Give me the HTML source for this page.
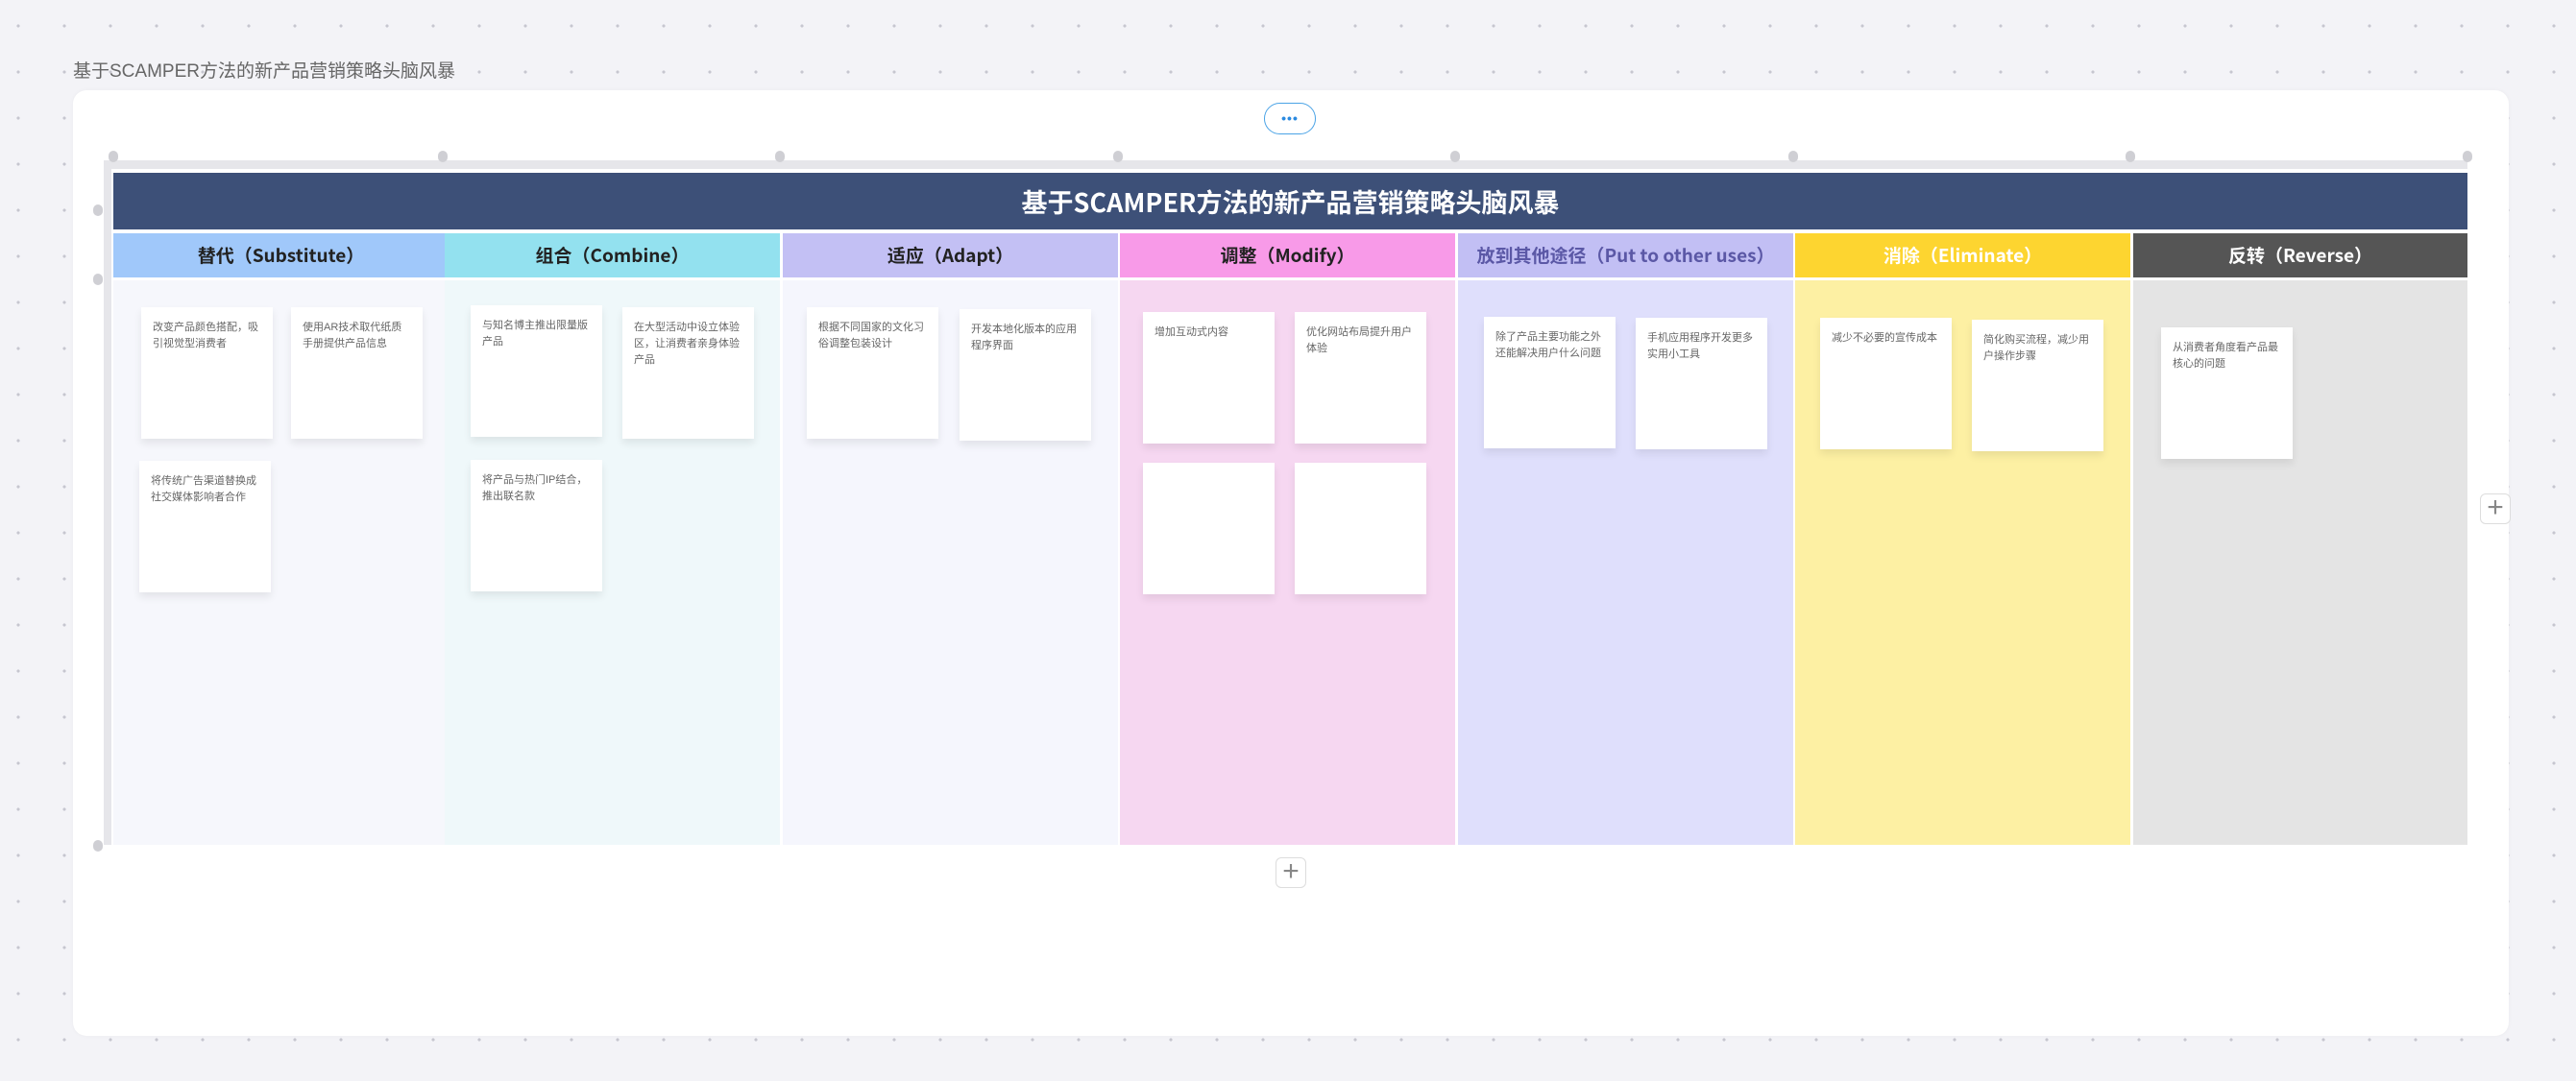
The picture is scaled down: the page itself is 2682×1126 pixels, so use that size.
<!DOCTYPE html>
<html><head><meta charset="utf-8"><style>
*{margin:0;padding:0;box-sizing:border-box}
body{width:2682px;height:1126px;overflow:hidden;position:relative;background-color:#f3f3f7;
background-image:radial-gradient(circle,#c6c6cf 1.4px,transparent 1.8px);background-size:48px 48px;background-position:-5px 3px;
font-family:"Liberation Sans","Noto Sans CJK SC",sans-serif}
.abs{position:absolute}
.title{left:76px;top:59px;font-size:19px;color:#666}
.panel{left:76px;top:94px;width:2536px;height:985px;background:#fff;border-radius:14px;box-shadow:0 0 4px rgba(0,0,0,.04)}
.more{left:1316px;top:107px;width:54px;height:33px;border:1.5px solid #4aa3e6;border-radius:17px;background:#fff;text-align:center;color:#2a8ae0;font-size:14px;line-height:30px;letter-spacing:1px;font-weight:bold}
.rt{left:116px;top:167px;width:2453px;height:9px;background:#e6e6ea}
.rl{left:108px;top:167px;width:8px;height:713px;background:#e6e6ea}
.dot{width:10px;height:12px;border-radius:5px;background:#cfcfd4}
.hdr{left:118px;top:180px;width:2451px;height:59px;background:#3d5078;color:#fff;font-size:27px;font-weight:bold;text-align:center;line-height:59px;font-family:"Noto Sans CJK SC",sans-serif}
.ch{top:243px;height:46px;width:349px;text-align:center;line-height:46px;font-size:19px;font-weight:bold;color:#222;font-family:"Noto Sans CJK SC",sans-serif}
.cb{top:292px;height:588px;width:349px}
.card{width:137px;height:137px;background:#fff;box-shadow:0 5px 8px rgba(0,0,0,.08);padding:13px 12px;font-size:11px;line-height:17px;color:#666}
.plus{width:32px;height:32px;border:1.5px solid #ddd;border-radius:6px;background:#fff;color:#888;font-size:30px;line-height:28px;text-align:center;font-weight:200}
</style></head><body>
<div class="abs title">基于SCAMPER方法的新产品营销策略头脑风暴</div>
<div class="abs panel"></div>
<div class="abs more">•••</div>
<div class="abs rt"></div><div class="abs rl"></div>
<div class="abs dot" style="left:113px;top:157px"></div>
<div class="abs dot" style="left:456px;top:157px"></div>
<div class="abs dot" style="left:807px;top:157px"></div>
<div class="abs dot" style="left:1159px;top:157px"></div>
<div class="abs dot" style="left:1510px;top:157px"></div>
<div class="abs dot" style="left:1862px;top:157px"></div>
<div class="abs dot" style="left:2213px;top:157px"></div>
<div class="abs dot" style="left:2564px;top:157px"></div>
<div class="abs dot" style="left:97px;top:213px"></div>
<div class="abs dot" style="left:97px;top:285px"></div>
<div class="abs dot" style="left:97px;top:875px"></div>
<div class="abs hdr">基于SCAMPER方法的新产品营销策略头脑风暴</div>

<div class="abs ch" style="left:118px;background:#a0c8fa">替代（Substitute）</div>
<div class="abs ch" style="left:463px;background:#93e1ef;width:349px">组合（Combine）</div>
<div class="abs ch" style="left:815px;background:#c3c0f4">适应（Adapt）</div>
<div class="abs ch" style="left:1166px;background:#f89ae8">调整（Modify）</div>
<div class="abs ch" style="left:1518px;background:#c2bff4;color:#5b58a6">放到其他途径（Put to other uses）</div>
<div class="abs ch" style="left:1869px;background:#fdd530;color:#fff">消除（Eliminate）</div>
<div class="abs ch" style="left:2221px;background:#555;color:#fff;width:348px">反转（Reverse）</div>

<div class="abs cb" style="left:118px;background:#f6f7fc"></div>
<div class="abs cb" style="left:463px;background:#eff8fa"></div>
<div class="abs cb" style="left:815px;background:#f5f6fd"></div>
<div class="abs cb" style="left:1166px;background:#f6d7f1"></div>
<div class="abs cb" style="left:1518px;background:#dfdffc"></div>
<div class="abs cb" style="left:1869px;background:#fdf0a3"></div>
<div class="abs cb" style="left:2221px;background:#e4e4e4;width:348px"></div>

<div class="abs card" style="left:147px;top:320px">改变产品颜色搭配，吸引视觉型消费者</div>
<div class="abs card" style="left:303px;top:320px">使用AR技术取代纸质手册提供产品信息</div>
<div class="abs card" style="left:145px;top:480px">将传统广告渠道替换成社交媒体影响者合作</div>
<div class="abs card" style="left:490px;top:318px">与知名博主推出限量版产品</div>
<div class="abs card" style="left:648px;top:320px">在大型活动中设立体验区，让消费者亲身体验产品</div>
<div class="abs card" style="left:490px;top:479px">将产品与热门IP结合，推出联名款</div>
<div class="abs card" style="left:840px;top:320px">根据不同国家的文化习俗调整包装设计</div>
<div class="abs card" style="left:999px;top:322px">开发本地化版本的应用程序界面</div>
<div class="abs card" style="left:1190px;top:325px">增加互动式内容</div>
<div class="abs card" style="left:1348px;top:325px">优化网站布局提升用户体验</div>
<div class="abs card" style="left:1190px;top:482px"></div>
<div class="abs card" style="left:1348px;top:482px"></div>
<div class="abs card" style="left:1545px;top:330px">除了产品主要功能之外还能解决用户什么问题</div>
<div class="abs card" style="left:1703px;top:331px">手机应用程序开发更多实用小工具</div>
<div class="abs card" style="left:1895px;top:331px">减少不必要的宣传成本</div>
<div class="abs card" style="left:2053px;top:333px">简化购买流程，减少用户操作步骤</div>
<div class="abs card" style="left:2250px;top:341px">从消费者角度看产品最核心的问题</div>

<div class="abs plus" style="left:2582px;top:514px">+</div>
<div class="abs plus" style="left:1328px;top:893px">+</div>
</body></html>
